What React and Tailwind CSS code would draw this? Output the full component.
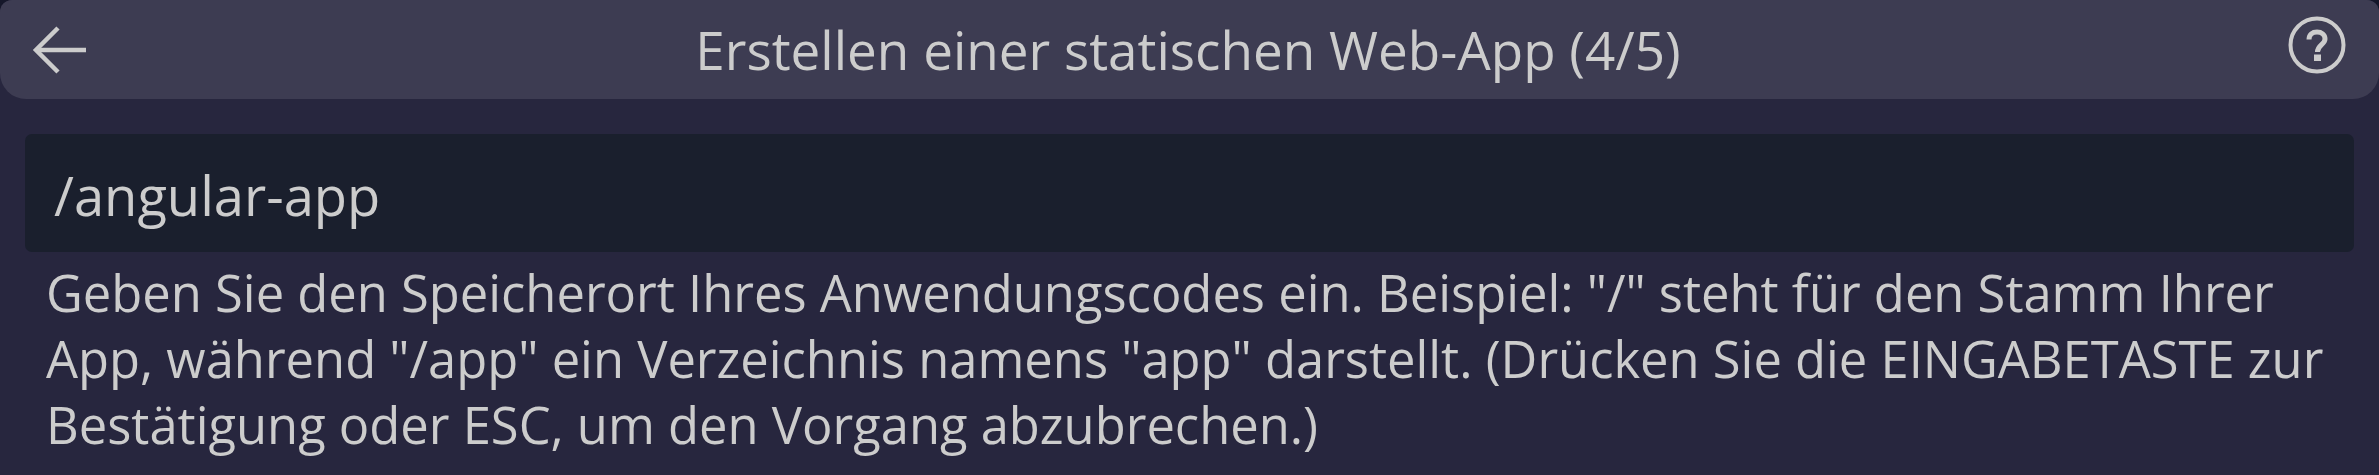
import React from "react";

const App = () => {
  return (
    <div className="h-[475px] w-[2379px] overflow-hidden bg-[#15172a] font-['Open_Sans',sans-serif] text-[#cccccc]">
      <div className="flex h-full flex-col rounded-t-[12px] bg-[#27263e]">
        {/* Title bar */}
        <div className="flex h-[99px] shrink-0 items-center rounded-t-[12px] rounded-b-[26px] bg-[#3d3c52] pl-[32px] pr-[33px]">
          <svg width="56" height="50" viewBox="0 0 56 50" fill="none" stroke="#cccccc" strokeWidth="4.500">
            <path d="M54 25H4" />
            <path d="M26 3L4 25L26 47" />
          </svg>
          <div className="flex-1 text-center text-[53px] leading-[66px]">Erstellen einer statischen Web-App (4/5)</div>
          <svg width="58" height="58" viewBox="0 0 58 58" fill="none" className="mt-[-9px]">
            <circle cx="29" cy="29" r="26.500" stroke="#cccccc" strokeWidth="4" />
            <path d="M21 23.500C21 18.500 24.500 16 29 16C33.500 16 37 18.500 37 23C37 28.500 29.500 29 29.500 36" stroke="#cccccc" strokeWidth="5" />
            <rect x="26" y="38.500" width="7" height="6.500" fill="#cccccc" />
          </svg>
        </div>
        {/* Input */}
        <div className="mx-[25px] mt-[35px] flex h-[118px] shrink-0 items-center rounded-[7px] bg-[#1a1f2d] pl-[29px] pt-[5px] text-[54.300px]">
          /angular-app
        </div>
        {/* Help text */}
        <div className="ml-[46px] mr-[20px] mt-[8px] text-[50.700px] leading-[66px]">
          Geben Sie den Speicherort Ihres Anwendungscodes ein. Beispiel: "/" steht für den Stamm Ihrer App, während "/app" ein Verzeichnis namens "app" darstellt. (Drücken Sie die EINGABETASTE zur Bestätigung oder ESC, um den Vorgang abzubrechen.)
        </div>
      </div>
    </div>
  );
};

export default App;
